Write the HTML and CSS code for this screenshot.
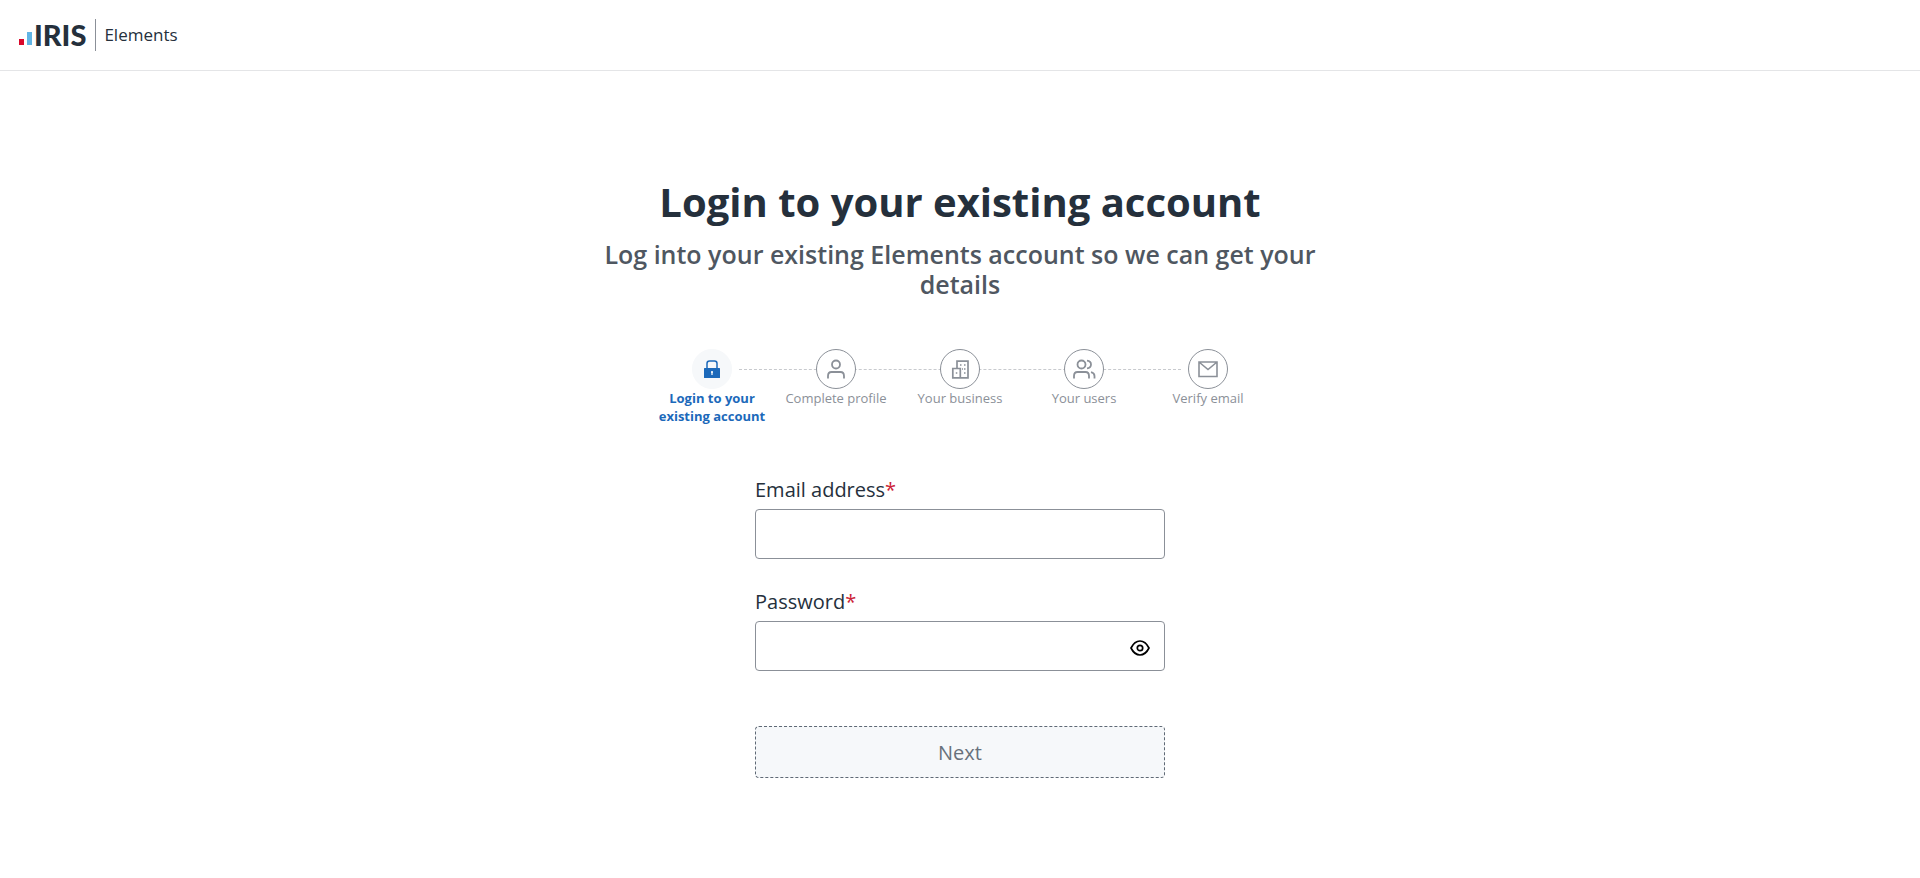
FILE: index.html
```html
<!DOCTYPE html>
<html lang="en">
<head>
<meta charset="UTF-8">
<meta name="viewport" content="width=device-width, initial-scale=1.0">
<title>Login to your existing account</title>
<link rel="stylesheet" href="styles.css">
</head>
<body>

<header class="header">
    <div class="logo">
        <svg class="logo-bars" width="13" height="20" viewBox="0 0 13 20" aria-hidden="true">
            <rect x="0" y="14" width="5" height="6" fill="#d9082b"/>
            <rect x="8" y="7" width="5" height="13" fill="#62b5e5"/>
        </svg>
        <span class="logo-name">IRIS</span>
    </div>
    <span class="product">Elements</span>
</header>

<main class="main">
    <h1 class="title">Login to your existing account</h1>
    <h2 class="subtitle">Log into your existing Elements account so we can get your details</h2>

    <ol class="steps">
        <li class="step active">
            <span class="step-icon">
                <svg width="20" height="20" viewBox="0 0 20 20">
                    <path d="M5 10V4.500Q5 2 7.500 2H12.500Q15 2 15 4.500V10" fill="none" stroke="currentColor" stroke-width="1.500"/>
                    <rect x="2" y="9" width="16" height="10" rx="0.500" fill="currentColor"/>
                    <path d="M10 12v4M9 13.200h2" stroke="#fff" stroke-width="1.200"/>
                </svg>
            </span>
            <span class="step-label">Login to your existing account</span>
        </li>
        <li class="step">
            <span class="step-icon">
                <svg width="20" height="20" viewBox="0 0 20 20" fill="none" stroke="currentColor" stroke-width="1.800">
                    <circle cx="10" cy="5.500" r="4"/>
                    <path d="M2 19.500V17Q2 13 5.500 13H14.500Q18 13 18 17V19.500"/>
                </svg>
            </span>
            <span class="step-label">Complete profile</span>
        </li>
        <li class="step">
            <span class="step-icon">
                <svg width="20" height="20" viewBox="0 0 20 20" fill="none" stroke="currentColor" stroke-width="1.700">
                    <path d="M7 9.500V2.200H18V18.800H2.800V9.500H10.300V18.800"/>
                    <path d="M10 6h1.500M14 6h1.500M14 10h1.500M14 14h1.500M12 10h1M5.800 14h1.500"/>
                </svg>
            </span>
            <span class="step-label">Your business</span>
        </li>
        <li class="step">
            <span class="step-icon">
                <svg width="24" height="20" viewBox="0 0 24 20" fill="none" stroke="currentColor" stroke-width="1.800">
                    <circle cx="9.500" cy="5.500" r="4"/>
                    <path d="M2 19.500V17Q2 13 5.500 13H13.500Q17 13 17 17V19.500"/>
                    <path d="M15 1.700Q19 2.200 19 5.500T15 9.400M19 13.200Q22.500 14 22.500 17V19.500"/>
                </svg>
            </span>
            <span class="step-label">Your users</span>
        </li>
        <li class="step">
            <span class="step-icon">
                <svg width="20" height="20" viewBox="0 0 20 20" fill="none" stroke="currentColor" stroke-width="1.600">
                    <path d="M1 3H19V17.500H1ZM1 3L10 10.500L19 3"/>
                </svg>
            </span>
            <span class="step-label">Verify email</span>
        </li>
    </ol>

    <form class="login-form">
        <div class="field">
            <label for="email">Email address<span class="required">*</span></label>
            <input type="email" id="email" name="email" required>
        </div>
        <div class="field">
            <label for="password">Password<span class="required">*</span></label>
            <div class="password-box">
                <input type="password" id="password" name="password" required>
                <button type="button" class="toggle-password" aria-label="Show password">
                    <svg width="20" height="16" viewBox="0 0 20 16" fill="none" stroke="#000" stroke-width="1.700">
                        <path d="M1 8Q4.500 1 10 1T19 8Q15.500 15 10 15T1 8Z" stroke-linejoin="round"/>
                        <circle cx="10" cy="8" r="2.700"/>
                    </svg>
                </button>
            </div>
        </div>
        <button type="submit" class="next" disabled>Next</button>
    </form>
</main>

</body>
</html>
```
FILE: styles.css
```css
* {
    box-sizing: border-box;
}
body {
    font-family: "Open Sans", "Noto Sans", sans-serif;
    color: #25303c;
    background-color: #fff;
    margin: 0;
}
.header {
    display: flex;
    align-items: center;
    gap: 9px;
    height: 71px;
    padding: 0 19px;
    border-bottom: 1px solid #e4e5e7;
}
.logo {
    display: flex;
    align-items: center;
    gap: 2px;
}
.logo-name {
    font-family: Lato, sans-serif;
    font-size: 29px;
    font-weight: 900;
    line-height: 32px;
}
.product {
    padding-left: 8px;
    border-left: 1px solid #8b9098;
    font-size: 17px;
    line-height: 32px;
}
.main {
    display: flex;
    flex-direction: column;
    align-items: center;
    padding: 104px 16px 40px;
}
.title {
    margin: 0;
    font-size: 40px;
    font-weight: 700;
    line-height: 54px;
    text-align: center;
}
.subtitle {
    max-width: 740px;
    margin: 10px 0 0;
    color: #4f5761;
    font-size: 25px;
    font-weight: 600;
    line-height: 30px;
    text-align: center;
}
.steps {
    position: relative;
    display: grid;
    grid-template-columns: repeat(5, 1fr);
    width: 100%;
    max-width: 620px;
    margin: 50px 0 0;
    padding: 0;
    list-style: none;
}
/* dashed line running behind the circles */
.steps::before {
    content: "";
    position: absolute;
    top: 20px;
    left: 89px;
    right: 89px;
    border-top: 1px dashed #c8cace;
}
.step {
    position: relative;
    display: flex;
    flex-direction: column;
    align-items: center;
    color: #8b9098;
}
.step-icon {
    display: flex;
    align-items: center;
    justify-content: center;
    width: 40px;
    height: 40px;
    border: 1px solid #8b9098;
    border-radius: 50%;
    background-color: #fff;
}
.step-label {
    max-width: 110px;
    font-size: 13px;
    line-height: 18px;
    text-align: center;
}
.step.active {
    color: #1c69ba;
    font-weight: 700;
}
.step.active .step-icon {
    border-color: #f6f8fa;
    background-color: #f6f8fa;
}
.login-form {
    display: flex;
    flex-direction: column;
    width: 100%;
    max-width: 410px;
    margin-top: 51px;
}
.field {
    display: flex;
    flex-direction: column;
    gap: 5px;
    margin-bottom: 29px;
}
.field label {
    font-size: 20px;
    line-height: 28px;
}
.required {
    color: #cc2336;
}
.field input {
    width: 100%;
    height: 50px;
    padding: 0 16px;
    border: 1px solid #8b9098;
    border-radius: 4px;
    font: inherit;
}
.password-box {
    position: relative;
}
.toggle-password {
    position: absolute;
    top: 14px;
    right: 12px;
    display: flex;
    align-items: center;
    justify-content: center;
    width: 26px;
    height: 26px;
    padding: 0;
    border: none;
    background: none;
    cursor: pointer;
}
.next {
    height: 52px;
    margin-top: 26px;
    border: 1px dashed #5f6975;
    border-radius: 4px;
    background-color: #f6f8fa;
    color: #68717c;
    font-family: inherit;
    font-size: 20px;
}
```
